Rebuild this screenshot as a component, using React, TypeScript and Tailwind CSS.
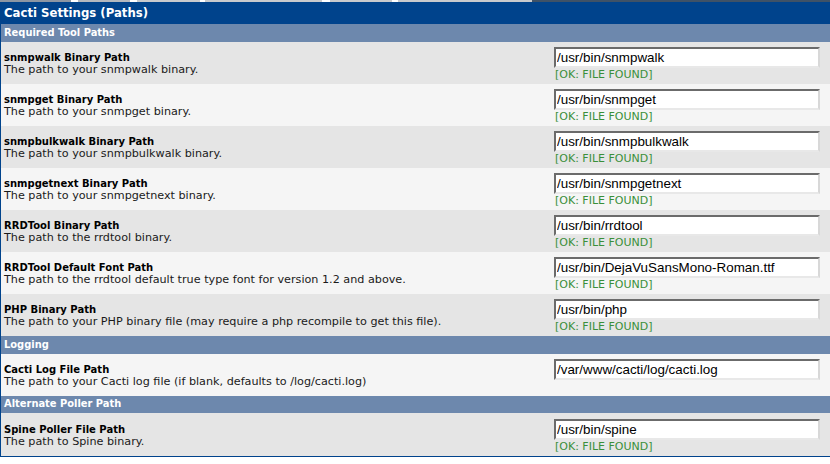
import React from 'react';

type Row = { title: string; desc: string; value: string; ok?: boolean };

const sections: { name: string; h: string; rows: Row[] }[] = [
  {
    name: 'Required Tool Paths',
    h: 'h-[18px]',
    rows: [
      { title: 'snmpwalk Binary Path', desc: 'The path to your snmpwalk binary.', value: '/usr/bin/snmpwalk', ok: true },
      { title: 'snmpget Binary Path', desc: 'The path to your snmpget binary.', value: '/usr/bin/snmpget', ok: true },
      { title: 'snmpbulkwalk Binary Path', desc: 'The path to your snmpbulkwalk binary.', value: '/usr/bin/snmpbulkwalk', ok: true },
      { title: 'snmpgetnext Binary Path', desc: 'The path to your snmpgetnext binary.', value: '/usr/bin/snmpgetnext', ok: true },
      { title: 'RRDTool Binary Path', desc: 'The path to the rrdtool binary.', value: '/usr/bin/rrdtool', ok: true },
      {
        title: 'RRDTool Default Font Path',
        desc: 'The path to the rrdtool default true type font for version 1.2 and above.',
        value: '/usr/bin/DejaVuSansMono-Roman.ttf',
        ok: true,
      },
      {
        title: 'PHP Binary Path',
        desc: 'The path to your PHP binary file (may require a php recompile to get this file).',
        value: '/usr/bin/php',
        ok: true,
      },
    ],
  },
  {
    name: 'Logging',
    h: 'h-[18px]',
    rows: [
      {
        title: 'Cacti Log File Path',
        desc: 'The path to your Cacti log file (if blank, defaults to /log/cacti.log)',
        value: '/var/www/cacti/log/cacti.log',
      },
    ],
  },
  {
    name: 'Alternate Poller Path',
    h: 'h-[17px]',
    rows: [{ title: 'Spine Poller File Path', desc: 'The path to Spine binary.', value: '/usr/bin/spine', ok: true }],
  },
];

const SettingRow: React.FC<{ row: Row; dark: boolean; tall?: boolean }> = ({ row, dark, tall }) => (
  <div
    className={`grid grid-cols-[553px_266px] items-center pt-[2px] ${tall ? 'h-[43px]' : 'h-[42px]'} ${
      dark ? 'bg-[#e5e5e5]' : 'bg-[#f5f5f5]'
    }`}
  >
    <div className="pl-[3px] text-black font-['DejaVu_Sans',Verdana,sans-serif]">
      <div className="text-[10px] leading-[12px] font-bold">{row.title}</div>
      <div className="text-[11.2px] leading-[12px] text-[#1a1a1a]">{row.desc}</div>
    </div>
    <div className="flex flex-col">
      <input
        readOnly
        value={row.value}
        className="h-[21px] w-[266px] border-2 border-t-[#6b6b6b] border-l-[#6b6b6b] border-b-[#e8e8e8] border-r-[#d8d8d8] bg-white pl-px text-[13.4px] text-black font-['Liberation_Sans',Arial,sans-serif] outline-none"
      />
      <div className="h-[13px] pl-px pt-px text-[11px] leading-[12px] text-[#3a8f3a] font-['DejaVu_Sans',Verdana,sans-serif]">
        {row.ok ? '[OK: FILE FOUND]' : ''}
      </div>
    </div>
  </div>
);

export default function App() {
  let i = 0;
  return (
    <div className="w-[830px] h-[464px] overflow-hidden bg-white">
      {/* tab strip remnant */}
      <div className="flex h-[2px]">
        <div className="w-[71px] bg-[#8c96a3]" />
        <div className="w-[7px] bg-white" />
        <div className="w-[52px] bg-[#b4b8be]" />
        <div className="w-[7px] bg-white" />
        <div className="w-[63px] bg-[#c8cacd]" />
        <div className="w-[5px] bg-white" />
        <div className="w-[117px] bg-[#c8cacd]" />
        <div className="w-[8px] bg-white" />
        <div className="w-[62px] bg-[#c8cacd]" />
        <div className="w-[6px] bg-white" />
        <div className="w-[134px] bg-[#c8cacd]" />
        <div className="flex-1 bg-[#3f5267]" />
      </div>
      <div className="border-l border-b border-[#00438c]">
        <div className="flex h-[22px] items-center bg-[#00438c] pl-[3px] text-[13px] font-bold text-white font-['DejaVu_Sans_Condensed','DejaVu_Sans',Tahoma,sans-serif]">
          Cacti Settings (Paths)
        </div>
        {sections.map((s) => (
          <div key={s.name}>
            <div
              className={`flex ${s.h} items-center bg-[#6d88ad] pl-[3px] text-[11px] font-bold text-white font-['DejaVu_Sans_Condensed','DejaVu_Sans',Tahoma,sans-serif]`}
            >
              {s.name}
            </div>
            {s.rows.map((r) => {
              const dark = i % 2 === 0;
              i++;
              return <SettingRow key={r.title} row={r} dark={s.name === 'Logging' ? false : dark} tall={s.name === 'Alternate Poller Path'} />;
            })}
          </div>
        ))}
      </div>
    </div>
  );
}
